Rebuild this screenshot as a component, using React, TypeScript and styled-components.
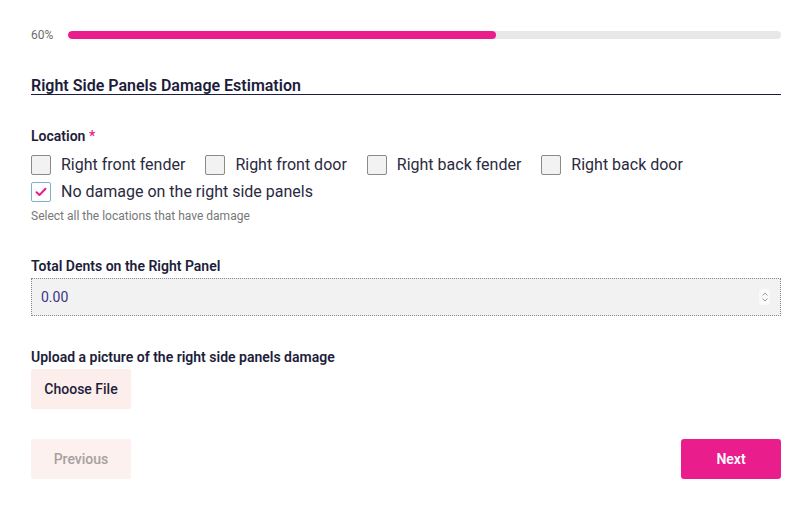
import styled, { createGlobalStyle } from 'styled-components'

const GlobalStyle = createGlobalStyle`
	body {
		margin: 0;
		background: #ffffff;
		font-family: Roboto, 'Liberation Sans', sans-serif;
		color: #1d1d3b;
	}
`

const Page = styled.div`
	width: 750px;
	padding: 26px 28px 0 31px;
`

const ProgressRow = styled.div`
	display: flex;
	align-items: center;
	gap: 14px;
	height: 18px;
`

const Percent = styled.span`
	font-size: 12px;
	color: #6b6b6b;
	width: 23px;
	white-space: nowrap;
`

const Track = styled.div`
	flex: 1;
	height: 8px;
	border-radius: 4px;
	background: #e8e8e8;
	overflow: hidden;
`

const Fill = styled.div`
	height: 100%;
	background: #e91e8c;
	border-radius: 4px;
`

const Title = styled.h2`
	margin: 33px 0 0;
	padding-bottom: 0;
	font-size: 16px;
	font-weight: 600;
	color: #1d1d3b;
	border-bottom: 1px solid #1d1d3b;
	line-height: 17px;
`

const Field = styled.div<{ $top: number }>`
	margin-top: ${(p) => p.$top}px;
`

const Label = styled.div`
	font-size: 14px;
	font-weight: 600;
	color: #1d1d3b;
	line-height: 16px;
`

const Required = styled.span`
	color: #e91e8c;
`

const Options = styled.div`
	display: flex;
	flex-wrap: wrap;
	column-gap: 20px;
	row-gap: 7px;
	margin-top: 11px;
	width: 700px;
`

const Option = styled.label`
	display: flex;
	align-items: center;
	gap: 10px;
	font-size: 16px;
	color: #2a2a40;
	line-height: 20px;
`

const Box = styled.span<{ $checked?: boolean }>`
	width: 18px;
	height: 18px;
	border: 1px solid ${(p) => (p.$checked ? '#7ab3c9' : '#8a8a8a')};
	border-radius: 2px;
	background: ${(p) => (p.$checked ? '#ffffff' : '#f2f2f2')};
	display: flex;
	align-items: center;
	justify-content: center;
`

const Help = styled.div`
	margin-top: 7px;
	font-size: 12px;
	color: #777777;
	line-height: 14px;
`

const NumberBox = styled.div`
	margin-top: 4px;
	height: 36px;
	border: 1px dotted #8a8a8a;
	background: #f2f2f2;
	display: flex;
	align-items: center;
	justify-content: space-between;
	padding: 0 10px 0 9px;
	font-size: 14px;
	color: #3b3486;
`

const Spinner = styled.span`
	width: 11px;
	height: 16px;
	border-radius: 4px;
	background: #fafafa;
	display: flex;
	align-items: center;
	justify-content: center;
`

const SoftButton = styled.button<{ $muted?: boolean }>`
	width: 100px;
	height: 40px;
	border: none;
	border-radius: 2px;
	background: ${(p) => (p.$muted ? '#fcf1ee' : '#fceeea')};
	color: ${(p) => (p.$muted ? '#a8a0a0' : '#1d1d3b')};
	font-family: Roboto, 'Liberation Sans', sans-serif;
	font-size: 14px;
	font-weight: 500;
	padding: 0;
`

const UploadButton = styled(SoftButton)`
	margin-top: 4px;
	display: block;
`

const Footer = styled.div`
	margin-top: 30px;
	display: flex;
	justify-content: space-between;
`

const NextButton = styled.button`
	width: 100px;
	height: 40px;
	border: none;
	border-radius: 3px;
	background: #e91e8c;
	color: #ffffff;
	font-family: Roboto, 'Liberation Sans', sans-serif;
	font-size: 14px;
	font-weight: 600;
`

const locations = [
	'Right front fender',
	'Right front door',
	'Right back fender',
	'Right back door',
]

export default function App() {
	return (
		<>
			<GlobalStyle />
			<Page>
				<ProgressRow>
					<Percent>60%</Percent>
					<Track>
						<Fill style={{ width: '60%' }} />
					</Track>
				</ProgressRow>

				<Title>Right Side Panels Damage Estimation</Title>

				<Field $top={33}>
					<Label>
						Location <Required>*</Required>
					</Label>
					<Options>
						{locations.map((l) => (
							<Option key={l}>
								<Box />
								{l}
							</Option>
						))}
						<Option>
							<Box $checked>
								<svg width="12" height="10" viewBox="0 0 12 10">
									<path
										d="M1.5 5.2 L4.5 8 L10.5 1.8"
										fill="none"
										stroke="#e91e8c"
										strokeWidth="2"
										strokeLinecap="round"
										strokeLinejoin="round"
									/>
								</svg>
							</Box>
							No damage on the right side panels
						</Option>
					</Options>
					<Help>Select all the locations that have damage</Help>
				</Field>

				<Field $top={35}>
					<Label>Total Dents on the Right Panel</Label>
					<NumberBox>
						<span>0.00</span>
						<Spinner>
							<svg width="8" height="12" viewBox="0 0 8 12">
								<path
									d="M1.5 4.5 L4 2 L6.5 4.5 M1.5 7.5 L4 10 L6.5 7.5"
									fill="none"
									stroke="#9a9a9a"
									strokeWidth="1"
								/>
							</svg>
						</Spinner>
					</NumberBox>
				</Field>

				<Field $top={33}>
					<Label>Upload a picture of the right side panels damage</Label>
					<UploadButton>Choose File</UploadButton>
				</Field>

				<Footer>
					<SoftButton $muted>Previous</SoftButton>
					<NextButton>Next</NextButton>
				</Footer>
			</Page>
		</>
	)
}
